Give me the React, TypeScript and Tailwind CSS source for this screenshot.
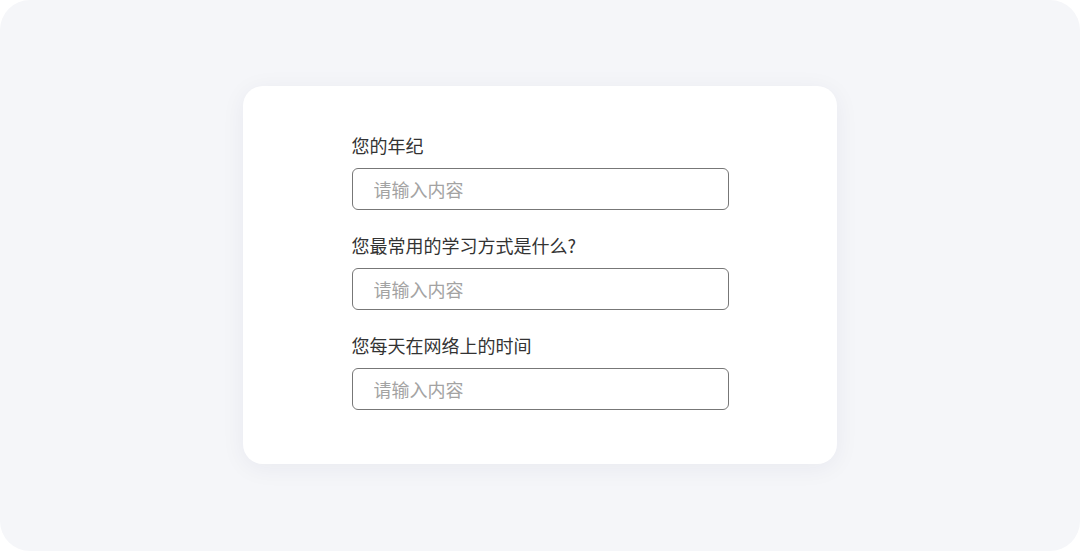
const fields = ["您的年纪", "您最常用的学习方式是什么?", "您每天在网络上的时间"];

export default function App() {
  return (
    <div className="h-[551px] w-[1080px] bg-white">
      <div
        className="flex h-full w-full flex-col items-center rounded-[30px] bg-[#f5f6f9] pt-[86px]"
        style={{ fontFamily: '"Noto Sans CJK SC", "Noto Sans", sans-serif' }}
      >
        <div className="flex h-[378px] w-[594px] flex-col items-center rounded-[20px] bg-white pt-[47px] shadow-[0_4px_24px_rgba(30,40,80,0.06)]">
          <div className="flex w-[377px] flex-col gap-[23px]">
            {fields.map((label) => (
              <div key={label} className="flex flex-col gap-[11px]">
                <label className="text-[18px] leading-[24px] text-[#333333]">{label}</label>
                <input
                  type="text"
                  placeholder="请输入内容"
                  className="h-[42px] w-full rounded-[6px] border-[1.5px] border-[#777777] px-[21px] text-[18px] text-[#333] outline-none placeholder:text-[#a3a3a3]"
                />
              </div>
            ))}
          </div>
        </div>
      </div>
    </div>
  );
}
